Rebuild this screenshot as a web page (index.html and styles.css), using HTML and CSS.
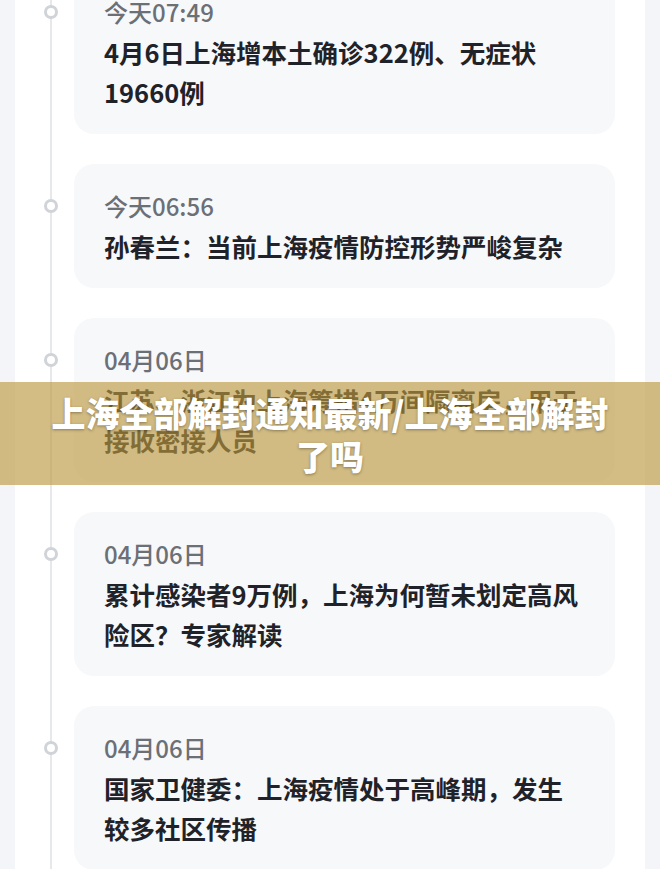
FILE: index.html
```html
<!DOCTYPE html>
<html>
<head>
<meta charset="utf-8">
<link rel="stylesheet" href="styles.css">
</head>
<body>

<div class="page">
	<ul class="timeline">
		<li class="item">
			<div class="time">今天07:49</div>
			<div class="title">4月6日上海增本土确诊322例、无症状19660例</div>
		</li>
		<li class="item">
			<div class="time">今天06:56</div>
			<div class="title">孙春兰：当前上海疫情防控形势严峻复杂</div>
		</li>
		<li class="item">
			<div class="time">04月06日</div>
			<div class="title">江苏、浙江为上海筹措4万间隔离房，用于接收密接人员</div>
		</li>
		<li class="item">
			<div class="time">04月06日</div>
			<div class="title">累计感染者9万例，上海为何暂未划定高风险区？专家解读</div>
		</li>
		<li class="item">
			<div class="time">04月06日</div>
			<div class="title">国家卫健委：上海疫情处于高峰期，发生较多社区传播</div>
		</li>
	</ul>
</div>

<div class="banner">
	<h1 class="banner-title">上海全部解封通知最新/上海全部解封了吗</h1>
</div>

</body>
</html>
```

FILE: styles.css
```css
body {
  margin: 0;
  background: #f3f5f8;
  font-family: "Noto Sans CJK SC", "Noto Sans", sans-serif;
  overflow: hidden;
}

.page {
  margin: 0 15px;
  min-height: 869px;
  background: #ffffff;
}

.timeline {
  position: relative;
  list-style: none;
  margin: -30px 0 0 0;
  padding: 0 30px 0 59px;
  display: flex;
  flex-direction: column;
  gap: 30px;
}

.timeline::before {
  content: "";
  position: absolute;
  left: 35px;
  top: 0;
  bottom: 0;
  width: 2px;
  background: #e6e8eb;
}

.item {
  position: relative;
  background: #f7f8fa;
  border-radius: 20px;
  padding: 22px 33px 22px 30px;
}

.item::before {
  content: "";
  position: absolute;
  left: -30px;
  top: 35px;
  width: 8px;
  height: 8px;
  border: 3px solid #d0d3d7;
  border-radius: 50%;
  background: #ffffff;
}

.time {
  font-size: 24px;
  line-height: 40px;
  color: #6b6f76;
  font-weight: 500;
}

.title {
  font-size: 25.5px;
  line-height: 40px;
  color: #1f2329;
  font-weight: 600;
}

.banner {
  position: absolute;
  left: 0;
  right: 0;
  top: 382px;
  height: 103px;
  background: rgba(188, 151, 62, 0.64);
  display: flex;
  align-items: center;
  justify-content: center;
}

.banner-title {
  margin: 0;
  padding: 0 40px;
  font-size: 34px;
  line-height: 43px;
  font-weight: 900;
  color: #ffffff;
  text-align: center;
  text-shadow: 0 1px 3px rgba(0, 0, 0, 0.35);
}
```
